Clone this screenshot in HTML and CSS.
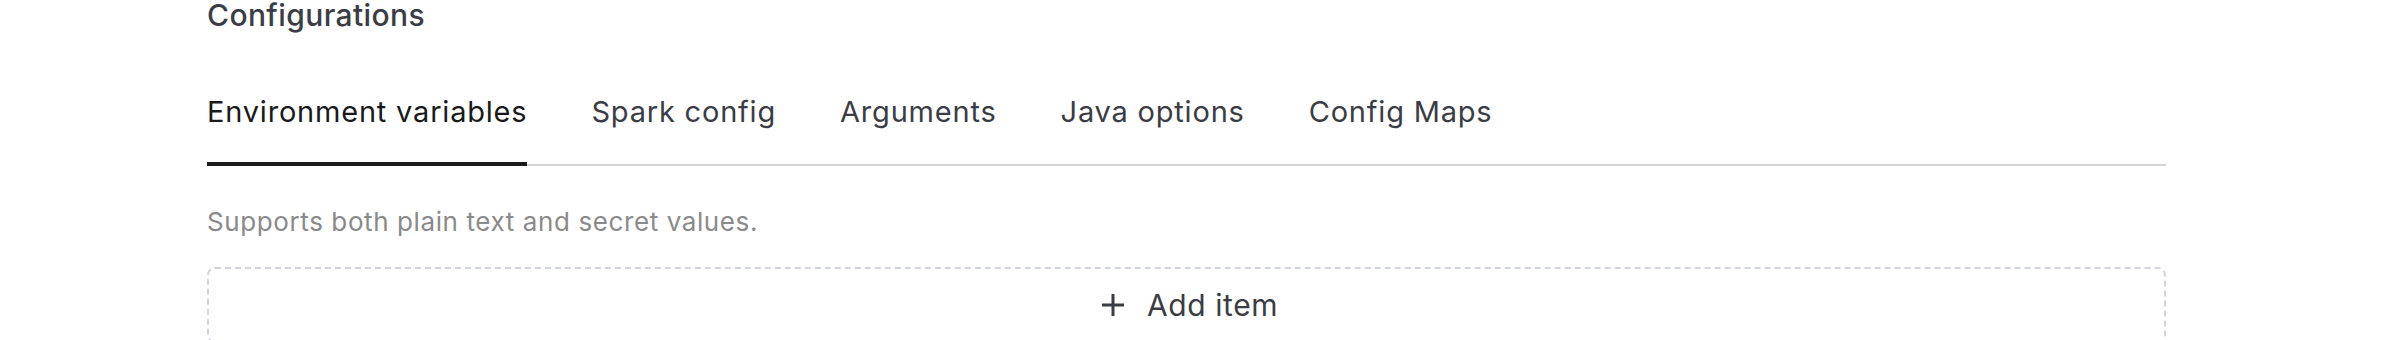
FILE: index.html
```html
<!DOCTYPE html>
<html lang="en">
<head>
    <meta charset="UTF-8">
    <meta name="viewport" content="width=device-width, initial-scale=1.0">
    <title>Configurations</title>
    <link rel="stylesheet" href="styles.css">
</head>
<body>
    <div class="section">
        <h3 class="section-title">Configurations</h3>

        <div class="tabs">
            <div class="tab active">Environment variables</div>
            <div class="tab">Spark config</div>
            <div class="tab">Arguments</div>
            <div class="tab">Java options</div>
            <div class="tab">Config Maps</div>
        </div>

        <p class="tab-description">Supports both plain text and secret values.</p>

        <button class="add-item">
            <svg class="add-icon" width="24" height="24" viewBox="0 0 24 24">
                <path d="M12 1v22M1 12h22" stroke="currentColor" stroke-width="3" fill="none"/>
            </svg>
            <span>Add item</span>
        </button>
    </div>
</body>
</html>
```

FILE: styles.css
```css
body {
    font-family: Inter, "Noto Sans", sans-serif;
    margin: 0;
    padding: 0 226px 0 207px;
    background-color: white;
    color: #3a3d44;
}
.section {
    display: flex;
    flex-direction: column;
}
.section-title {
    margin: 0;
    font-size: 30px;
    line-height: 30px;
    font-weight: 500;
    letter-spacing: 0.4px;
    color: #3a3d44;
}
.tabs {
    display: flex;
    gap: 64px;
    margin-top: 62px;
    box-shadow: inset 0 -2px 0 #d4d4d4;
}
.tab {
    font-size: 29px;
    line-height: 40px;
    letter-spacing: 0.8px;
    padding-bottom: 30px;
    border-bottom: 4px solid transparent;
    color: #3a3d44;
    cursor: pointer;
}
.tab.active {
    color: #1a1a1a;
    border-bottom-color: #1a1a1a;
}
.tab-description {
    margin: 38px 0 0;
    font-size: 26px;
    line-height: 36px;
    letter-spacing: 0.6px;
    color: #8a8a8a;
}
.add-item {
    margin-top: 27px;
    display: flex;
    align-items: center;
    justify-content: center;
    gap: 22px;
    padding: 20px 20px 20px 26px;
    background: white;
    border: 2px dashed #d1d5db;
    border-radius: 8px;
    font-family: inherit;
    font-size: 30px;
    line-height: 32px;
    letter-spacing: 0.6px;
    color: #3a3d44;
    cursor: pointer;
}
.add-icon {
    display: block;
}
```
